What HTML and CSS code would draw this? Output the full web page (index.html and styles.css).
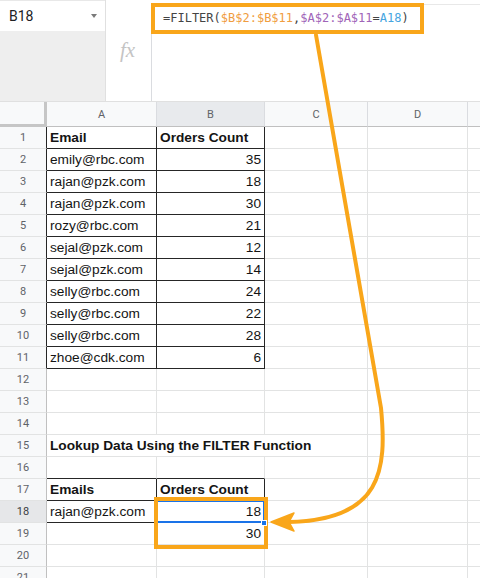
FILE: index.html
```html
<!DOCTYPE html>
<html>
<head>
<meta charset="utf-8">
<link rel="stylesheet" href="styles.css">
</head>
<body>
<div class="app">
  <div class="fbar">
    <div class="namecol">
      <div class="namebox"><span>B18</span><span class="caret"></span></div>
      <div class="namefill"></div>
    </div>
    <div class="fxcol"><span class="fx">fx</span></div>
    <div class="formcol">
      <div class="formula">=FILTER(<span class="r1">$B$2:$B$11</span>,<span class="r2">$A$2:$A$11</span>=<span class="r3">A18</span>)</div>
      <div class="formrest"></div>
    </div>
  </div>
  <div class="grid">
    <div class="corner"></div><div class="hd">A</div><div class="hd hsel">B</div><div class="hd">C</div><div class="hd">D</div><div class="hd e"></div>

    <div class="rn dr">1</div><div class="c bold dr db">Email</div><div class="c bold dr db">Orders Count</div><div class="c"></div><div class="c"></div><div class="c e"></div>
    <div class="rn dr">2</div><div class="c dr db">emily@rbc.com</div><div class="c n dr db">35</div><div class="c"></div><div class="c"></div><div class="c e"></div>
    <div class="rn dr">3</div><div class="c dr db">rajan@pzk.com</div><div class="c n dr db">18</div><div class="c"></div><div class="c"></div><div class="c e"></div>
    <div class="rn dr">4</div><div class="c dr db">rajan@pzk.com</div><div class="c n dr db">30</div><div class="c"></div><div class="c"></div><div class="c e"></div>
    <div class="rn dr">5</div><div class="c dr db">rozy@rbc.com</div><div class="c n dr db">21</div><div class="c"></div><div class="c"></div><div class="c e"></div>
    <div class="rn dr">6</div><div class="c dr db">sejal@pzk.com</div><div class="c n dr db">12</div><div class="c"></div><div class="c"></div><div class="c e"></div>
    <div class="rn dr">7</div><div class="c dr db">sejal@pzk.com</div><div class="c n dr db">14</div><div class="c"></div><div class="c"></div><div class="c e"></div>
    <div class="rn dr">8</div><div class="c dr db">selly@rbc.com</div><div class="c n dr db">24</div><div class="c"></div><div class="c"></div><div class="c e"></div>
    <div class="rn dr">9</div><div class="c dr db">selly@rbc.com</div><div class="c n dr db">22</div><div class="c"></div><div class="c"></div><div class="c e"></div>
    <div class="rn dr">10</div><div class="c dr db">selly@rbc.com</div><div class="c n dr db">28</div><div class="c"></div><div class="c"></div><div class="c e"></div>
    <div class="rn dr">11</div><div class="c dr db">zhoe@cdk.com</div><div class="c n dr db">6</div><div class="c"></div><div class="c"></div><div class="c e"></div>
    <div class="rn">12</div><div class="c"></div><div class="c"></div><div class="c"></div><div class="c"></div><div class="c e"></div>
    <div class="rn">13</div><div class="c"></div><div class="c"></div><div class="c"></div><div class="c"></div><div class="c e"></div>
    <div class="rn">14</div><div class="c"></div><div class="c"></div><div class="c"></div><div class="c"></div><div class="c e"></div>
    <div class="rn">15</div><div class="c bold span3">Lookup Data Using the FILTER Function</div><div class="c"></div><div class="c e"></div>
    <div class="rn">16</div><div class="c db"></div><div class="c db"></div><div class="c"></div><div class="c"></div><div class="c e"></div>
    <div class="rn">17</div><div class="c bold dr db">Emails</div><div class="c bold dr">Orders Count</div><div class="c"></div><div class="c"></div><div class="c e"></div>
    <div class="rn rsel">18</div><div class="c db">rajan@pzk.com</div><div class="c n active">18<span class="sel"></span><span class="handle"></span><span class="hl"></span></div><div class="c"></div><div class="c"></div><div class="c e"></div>
    <div class="rn">19</div><div class="c"></div><div class="c n">30</div><div class="c"></div><div class="c"></div><div class="c e"></div>
    <div class="rn">20</div><div class="c"></div><div class="c"></div><div class="c"></div><div class="c"></div><div class="c e"></div>
    <div class="rn">21</div><div class="c"></div><div class="c"></div><div class="c"></div><div class="c"></div><div class="c e"></div>
  </div>
  <svg class="arrow" width="480" height="578" viewBox="0 0 480 578">
    <path d="M316 35 L381 408 C387 470 382 520 289 522" fill="none" stroke="#f9a61a" stroke-width="4" stroke-linecap="round"/>
    <polygon points="271,522 294,513 289,522 294,531" fill="#f9a61a" stroke="#f9a61a" stroke-width="1.5" stroke-linejoin="round"/>
  </svg>
</div>
</body>
</html>
```

FILE: styles.css
```css
* { box-sizing: border-box; }

body {
  margin: 0;
  width: 480px;
  height: 578px;
  overflow: hidden;
  background: #fff;
  font-family: "Liberation Sans", Arial, sans-serif;
}

.app {
  position: relative;
  width: 480px;
  height: 578px;
  overflow: hidden;
}

/* formula bar */
.fbar {
  display: flex;
  height: 102px;
  border-bottom: 1px solid #e0e0e0;
}

.namecol {
  width: 106px;
  border-right: 1px solid #e0e0e0;
  display: flex;
  flex-direction: column;
}

.namebox {
  height: 31px;
  display: flex;
  align-items: center;
  justify-content: space-between;
  padding: 0 8px 0 9px;
  font-family: Roboto, "Liberation Sans", sans-serif;
  font-size: 14px;
  color: #202124;
  border-top: 1px solid #e8e8e8;
}

.caret {
  width: 0;
  height: 0;
  border-left: 3.5px solid transparent;
  border-right: 3.5px solid transparent;
  border-top: 4px solid #7a7a7a;
}

.namefill {
  flex: 1;
  background: #eeeeee;
}

.fxcol {
  width: 45px;
  display: flex;
  align-items: center;
  justify-content: center;
}

.fx {
  font-family: "Liberation Serif", serif;
  font-style: italic;
  font-size: 21px;
  color: #c4c4c4;
  margin-right: 2px;
}

.formcol {
  flex: 1;
  display: flex;
  flex-direction: column;
  background: linear-gradient(#e8e8e8, #e8e8e8) no-repeat 0 4px / 100% 1px;
}

.formula {
  margin-top: 3px;
  width: 273px;
  height: 31px;
  border: 4px solid #f9a61a;
  padding-left: 8px;
  font-family: "DejaVu Sans Mono", "Liberation Mono", monospace;
  font-size: 12px;
  line-height: 23px;
  color: #444;
  white-space: nowrap;
  background: #fff;
}

.r1 { color: #f09d3f; }
.r2 { color: #a064b8; }
.r3 { color: #46a5df; }

.formrest {
  flex: 1;
  border-left: 1px solid #dadce0;
}

/* grid */
.grid {
  display: grid;
  grid-template-columns: 47px 110px 108px 103px 100px 1fr;
  grid-template-rows: 25px repeat(21, 22px);
}

.corner {
  background: #f8f9fa;
  border-right: 3px solid #c6c6c6;
  border-bottom: 3px solid #c6c6c6;
}

.hd {
  background: #f8f9fa;
  border-right: 1px solid #dadce0;
  border-bottom: 1px solid #c0c0c0;
  display: flex;
  align-items: center;
  justify-content: center;
  font-family: Roboto, "Liberation Sans", sans-serif;
  font-size: 11px;
  color: #5f6368;
}

.hd.hsel { background: #e8eaed; }
.hd.e { border-right: none; }

.rn {
  background: #f8f9fa;
  border-right: 1px solid #c0c0c0;
  border-bottom: 1px solid #e2e3e3;
  display: flex;
  align-items: center;
  justify-content: center;
  font-family: Roboto, "Liberation Sans", sans-serif;
  font-size: 11px;
  color: #5f6368;
}

.rn.rsel { background: #e6e7e9; color: #3c4043; }

.c {
  border-right: 1px solid #e2e3e3;
  border-bottom: 1px solid #e2e3e3;
  padding: 0 3px;
  font-size: 13.7px;
  line-height: 21px;
  white-space: nowrap;
  color: #141414;
}

.c.e { border-right: none; }
.n { text-align: right; }
.bold { font-weight: bold; }
.span3 { grid-column: span 3; overflow: visible; }

.rn.dr, .c.dr { border-right-color: #262626; }
.c.db { border-bottom-color: #262626; }

/* active cell overlays */
.active { position: relative; }

.sel {
  position: absolute;
  top: -1px;
  left: -2px;
  right: -1px;
  bottom: -1px;
  border: 2px solid #1a73e8;
  z-index: 1;
}

.handle {
  position: absolute;
  right: -3px;
  bottom: -4px;
  width: 6px;
  height: 6px;
  background: #1a73e8;
  border: 1px solid #fff;
  z-index: 3;
}

.hl {
  position: absolute;
  top: -4px;
  left: -3px;
  right: -4px;
  height: 52px;
  border: 4px solid #f9a61a;
  z-index: 2;
}

.arrow {
  position: absolute;
  top: 0;
  left: 0;
  z-index: 5;
  pointer-events: none;
}
```
